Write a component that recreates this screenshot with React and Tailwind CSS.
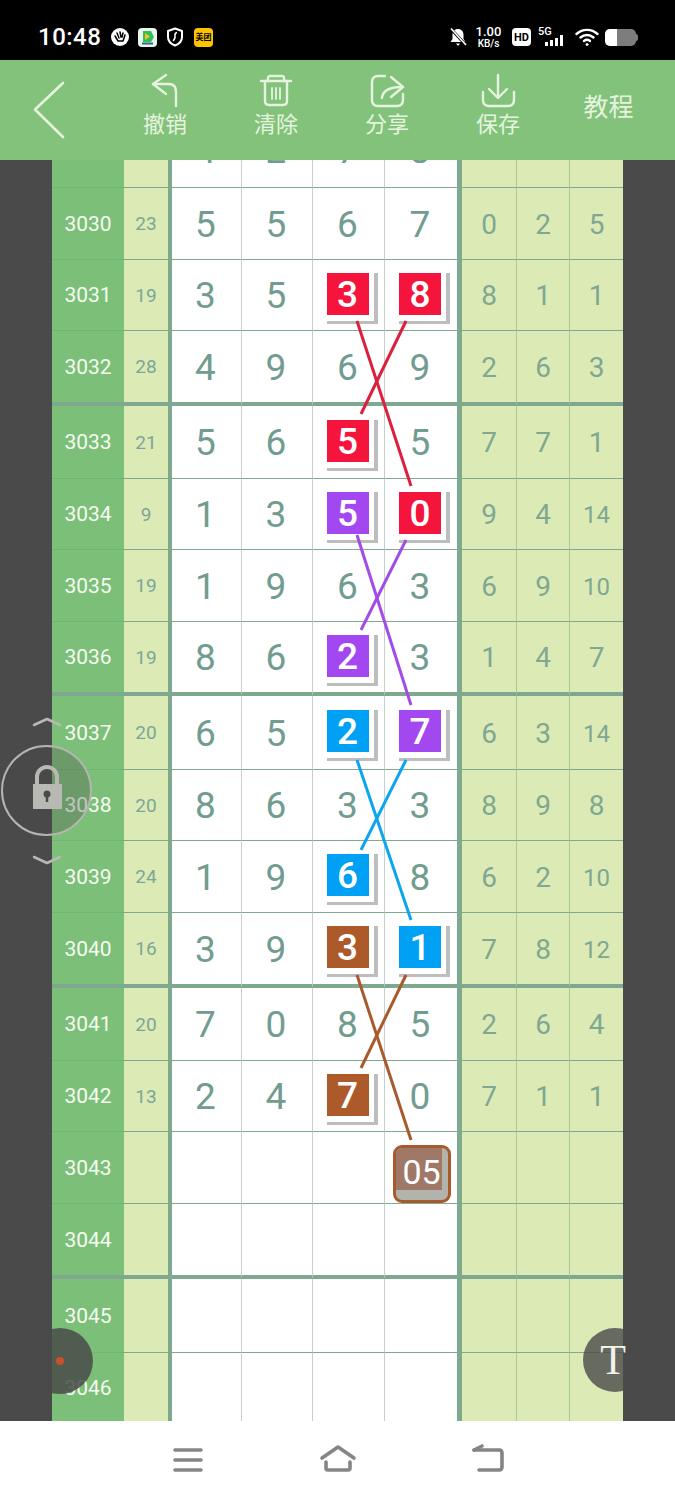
import React from 'react';

const tileColors = {
  red: 'bg-[#f5143c]',
  purple: 'bg-[#a348f0]',
  blue: 'bg-[#00a0f5]',
  brown: 'bg-[#ad5a2a]',
};

const t = (n, c) => ({ n, c });

const rows = [
  { h: 'h-[28px]', cut: true, nums: [4, 2, 7, 8], right: [7, 6, 3] },
  { h: 'h-[72px]', id: 3030, sum: 23, nums: [5, 5, 6, 7], right: [0, 2, 5] },
  { h: 'h-[71px]', id: 3031, sum: 19, nums: [3, 5, t(3, 'red'), t(8, 'red')], right: [8, 1, 1] },
  { h: 'h-[75px]', thick: true, id: 3032, sum: 28, nums: [4, 9, 6, 9], right: [2, 6, 3] },
  { h: 'h-[73px]', id: 3033, sum: 21, nums: [5, 6, t(5, 'red'), 5], right: [7, 7, 1] },
  { h: 'h-[71px]', id: 3034, sum: 9, nums: [1, 3, t(5, 'purple'), t(0, 'red')], right: [9, 4, 14] },
  { h: 'h-[72px]', id: 3035, sum: 19, nums: [1, 9, 6, 3], right: [6, 9, 10] },
  { h: 'h-[74px]', thick: true, id: 3036, sum: 19, nums: [8, 6, t(2, 'purple'), 3], right: [1, 4, 7] },
  { h: 'h-[74px]', id: 3037, sum: 20, nums: [6, 5, t(2, 'blue'), t(7, 'purple')], right: [6, 3, 14] },
  { h: 'h-[71px]', id: 3038, sum: 20, nums: [8, 6, 3, 3], right: [8, 9, 8] },
  { h: 'h-[72px]', id: 3039, sum: 24, nums: [1, 9, t(6, 'blue'), 8], right: [6, 2, 10] },
  { h: 'h-[75px]', thick: true, id: 3040, sum: 16, nums: [3, 9, t(3, 'brown'), t(1, 'blue')], right: [7, 8, 12] },
  { h: 'h-[73px]', id: 3041, sum: 20, nums: [7, 0, 8, 5], right: [2, 6, 4] },
  { h: 'h-[71px]', id: 3042, sum: 13, nums: [2, 4, t(7, 'brown'), 0], right: [7, 1, 1] },
  { h: 'h-[72px]', id: 3043, nums: ['', '', '', 'pending'], right: ['', '', ''] },
  { h: 'h-[75px]', thick: true, id: 3044, nums: ['', '', '', ''], right: ['', '', ''] },
  { h: 'h-[74px]', id: 3045, nums: ['', '', '', ''], right: ['', '', ''] },
  { h: 'h-[69px]', last: true, id: 3046, nums: ['', '', '', ''], right: ['', '', ''] },
];

const numWidths = ['w-[70px]', 'w-[71px]', 'w-[72px]', 'w-[77px]'];
const rightWidths = ['w-[55px]', 'w-[53px]', 'w-[53px]'];

const links = [
  ['#dc1f3e', 357, 321, 411, 486],
  ['#dc1f3e', 406, 321, 361, 414],
  ['#a24be8', 357, 535, 411, 705],
  ['#a24be8', 406, 540, 361, 630],
  ['#0ea5f0', 357, 760, 411, 920],
  ['#0ea5f0', 406, 760, 361, 850],
  ['#a85a2c', 357, 975, 411, 1140],
  ['#a85a2c', 406, 975, 361, 1068],
];

const Tile = ({ n, c }) => (
  <div className={`relative mb-[5px] flex h-[42px] w-[42px] items-center justify-center text-[37px] font-medium text-white ${tileColors[c]}`}>
    <div className="absolute left-0 top-0 h-[51px] w-[51px] border-b-[3px] border-r-4 border-[#bdbdbd]"></div>
    <span className="relative top-[1px]">{n}</span>
  </div>
);

const Pending = () => (
  <div className="relative ml-[3px] mt-[11px] flex h-[58px] w-[58px] items-center justify-center overflow-hidden rounded-[9px] border-[3px] border-[#a85a2c] bg-[#b3b3ae]">
    <div className="absolute left-0 top-0 h-[42px] w-[46px] bg-[#a07868]"></div>
    <span className="relative -mt-[4px] text-[34px] text-white">05</span>
  </div>
);

const Row = ({ row }) => {
  const border = row.thick ? 'border-b-4 border-[#7fa98f]' : row.last ? '' : 'border-b border-[#7fa98f]';
  const align = row.cut ? 'items-end overflow-hidden' : 'items-center pt-[2px]';
  const digit = row.cut ? 'h-[72px] shrink-0 leading-[72px]' : '';
  return (
    <div className={`flex ${row.h}`}>
      <div className={`flex w-[72px] items-center justify-center bg-[#7cbf78] pt-[2px] text-[21px] text-[#f6fbf2] ${row.thick ? border : row.last ? '' : 'border-b border-[#73b37a]'}`}>
        {row.id}
      </div>
      <div className={`flex w-[48px] items-center justify-center border-r-4 border-r-[#7fa98f] bg-[#dcebb5] pt-[2px] text-[19px] text-[#7ba598] ${border}`}>
        {row.sum}
      </div>
      {row.nums.map((v, i) => (
        <div
          key={i}
          className={`flex justify-center bg-white pr-[2px] text-[37px] text-[#719c8f] ${align} ${numWidths[i]} ${border} ${i === 3 ? 'border-r-[5px] border-r-[#7fa98f]' : 'border-r border-r-[#c4d0cc]'}`}
        >
          {v === 'pending' ? <Pending /> : typeof v === 'object' ? <Tile {...v} /> : <span className={digit}>{v}</span>}
        </div>
      ))}
      {row.right.map((v, i) => (
        <div
          key={i}
          className={`flex justify-center bg-[#dcebb5] text-[28px] text-[#7fa792] ${align} ${rightWidths[i]} ${border} ${i === 2 ? '' : 'border-r border-r-[#a8c897]'}`}
        >
          <span className={`${digit} ${v > 9 ? 'text-[24px]' : ''}`}>{v}</span>
        </div>
      ))}
    </div>
  );
};

const HeaderIcon = ({ label, children }) => (
  <div className="flex w-[111px] flex-col items-center pr-[1px] pt-[12px]">
    <svg width="40" height="38" viewBox="0 0 40 38" fill="none" stroke="#e6f4df" strokeWidth="2.4" strokeLinecap="round" strokeLinejoin="round">
      {children}
    </svg>
    <span className="-mt-[1px] text-[22px] leading-[26px] text-[#e6f4df]">{label}</span>
  </div>
);

const StatusBar = () => (
  <div className="flex h-[60px] items-center justify-between bg-black pl-[38px] pr-[37px] pt-[14px] text-white">
    <div className="flex items-center">
      <span className="w-[72px] text-[24px] font-medium leading-none tracking-[0.5px]">10:48</span>
      {/* app notification icons */}
      <svg width="20" height="20" viewBox="0 0 20 20" className="mr-[8px]">
        <circle cx="10" cy="10" r="9" fill="#fff" />
        <path d="M5 9l3 5h5l2-6M7 6l2 5M10 5l1 5M13 6l-1 4" fill="none" stroke="#000" strokeWidth="1.5" strokeLinecap="round" />
      </svg>
      <div className="mr-[9px] flex h-[19px] w-[19px] items-center justify-center rounded-[4px] bg-[#e9f5ef]">
        <svg width="15" height="15" viewBox="0 0 15 15">
          <path d="M3 1h8l3 6-3 5H3z" fill="#2fbf5b" />
          <path d="M5 3l5 3.500-5 3.500z" fill="#f5c518" />
          <rect x="2" y="12.500" width="11" height="2" fill="#2a6d7c" />
        </svg>
      </div>
      <svg width="18" height="20" viewBox="0 0 18 20" className="mr-[10px]" fill="none" stroke="#fff" strokeWidth="2" strokeLinejoin="round">
        <path d="M9 1.500l7 2.500v6c0 4-3 7-7 8.500-4-1.500-7-4.500-7-8.500V4z" />
        <path d="M11 5.500C6 7 12 10 7 14" strokeWidth="1.500" />
      </svg>
      <div className="flex h-[19px] w-[19px] items-center justify-center overflow-hidden rounded-[4px] bg-[#ffc300] text-[8px] font-bold leading-none text-black" style={{ fontFamily: '"Noto Sans CJK SC", sans-serif' }}>
        美团
      </div>
    </div>
    <div className="flex items-center">
      <svg width="20" height="20" viewBox="0 0 20 20" className="mr-[6px]">
        <path d="M10 2c3.500 0 5.500 2.500 5.500 6v4l2 3H2.500l2-3V8C4.500 4.500 6.500 2 10 2z" fill="#fff" />
        <path d="M8 16.500h4L10 19z" fill="#fff" />
        <path d="M2 1l16 17" stroke="#000" strokeWidth="3" />
        <path d="M3 1.500l15 16.500" stroke="#fff" strokeWidth="1.600" />
      </svg>
      <div className="mr-[9px] flex w-[29px] flex-col items-center font-medium leading-none">
        <span className="text-[13px] leading-[13px]">1.00</span>
        <span className="text-[10px] leading-[11px]">KB/s</span>
      </div>
      <div className="mr-[7px] flex h-[18px] w-[19px] items-center justify-center rounded-[4px] bg-white text-[11px] font-bold leading-none text-black">HD</div>
      <div className="relative mr-[8px] h-[20px] w-[29px]">
        <span className="absolute left-0 top-[-1px] text-[11px] font-medium leading-[12px]">5G</span>
        <svg width="29" height="20" viewBox="0 0 29 20" className="absolute left-0 top-0">
          <rect x="7" y="15" width="3" height="4" fill="#fff" />
          <rect x="12" y="13" width="3" height="6" fill="#fff" />
          <rect x="17" y="11" width="3" height="8" fill="#fff" />
          <rect x="22" y="8" width="3" height="11" fill="#fff" />
        </svg>
      </div>
      <svg width="24" height="20" viewBox="0 0 24 20" className="mr-[6px]" fill="none" stroke="#fff" strokeWidth="2.400" strokeLinecap="round">
        <path d="M1.500 7c6-5.500 15-5.500 21 0" />
        <path d="M5.500 10.500c3.800-3.300 9.200-3.300 13 0" />
        <path d="M9 14c1.800-1.400 4.200-1.400 6 0" />
        <circle cx="12" cy="17.500" r="1" fill="#fff" strokeWidth="1" />
      </svg>
      <div className="flex h-[17px] w-[31px] overflow-hidden rounded-[5px] bg-[#7d7d7d]">
        <div className="h-full w-[12px] bg-white"></div>
      </div>
      <div className="h-[7px] w-[2px] rounded-r-[2px] bg-[#7d7d7d]"></div>
    </div>
  </div>
);

const Header = () => (
  <div className="flex h-[100px] bg-[#82c27b]" style={{ fontFamily: '"Noto Sans CJK SC", sans-serif' }}>
    <div className="flex w-[110px] items-center pl-[33px]">
      <svg width="34" height="60" viewBox="0 0 34 60" fill="none" stroke="#e6f4df" strokeWidth="2.600" strokeLinecap="round" strokeLinejoin="round">
        <path d="M30 3L2 29.500 30 57" />
      </svg>
    </div>
    <HeaderIcon label="撤销">
      <path d="M21 3L8 12l13 10" />
      <path d="M8 12h16q7 0 7 8v14" />
    </HeaderIcon>
    <HeaderIcon label="清除">
      <path d="M5 9h30" />
      <path d="M12 9V6q0-2 2-2h12q2 0 2 2v3" />
      <path d="M9 9v20q0 4 4 4h14q4 0 4-4V9" />
      <path d="M16 16v11M20 16v11M24 16v11" strokeWidth="1.800" />
    </HeaderIcon>
    <HeaderIcon label="分享">
      <path d="M18 4h-7q-6 0-6 6v18q0 6 6 6h19q6 0 6-6v-6" />
      <path d="M15 26q1-11 20-11" />
      <path d="M24 5l12 10-12 10" />
    </HeaderIcon>
    <HeaderIcon label="保存">
      <path d="M20 3v22" />
      <path d="M11 17l9 9 9-9" />
      <path d="M5 20v8q0 6 6 6h19q6 0 6-6v-8" />
    </HeaderIcon>
    <div className="flex w-[109px] items-center justify-center pb-[9px] text-[25px] text-[#e6f4df]">教程</div>
  </div>
);

const BottomNav = () => (
  <div className="flex h-[79px] items-center bg-white pb-[1px]">
    <svg width="675" height="79" viewBox="0 1421 675 79" fill="none" stroke="#858585" strokeWidth="3.600" strokeLinecap="round" strokeLinejoin="round">
      <path d="M175 1450h26M175 1460h26M175 1470h26" />
      <path d="M322 1458l16-11 16 11" />
      <path d="M326 1462v6q0 2 2 2h20q2 0 2-2v-6" />
      <path d="M474 1450h25q3 0 3 3v14q0 3-3 3h-20" />
      <path d="M482 1446l-8 4" />
    </svg>
  </div>
);

export default function App() {
  return (
    <div className="relative h-[1500px] w-[675px] overflow-hidden bg-[#4a4a4a]" style={{ fontFamily: 'Roboto, "Noto Sans CJK SC", sans-serif' }}>
      <StatusBar />
      <Header />

      <div className="relative h-[1261px] overflow-hidden pl-[52px]">
        {rows.map((row, i) => (
          <Row key={i} row={row} />
        ))}

        {/* trend lines between the marked numbers */}
        <svg className="absolute left-0 top-0" width="675" height="1261" viewBox="0 160 675 1261">
          {links.map(([color, x1, y1, x2, y2], i) => (
            <line key={i} x1={x1} y1={y1} x2={x2} y2={y2} stroke={color} strokeWidth="3" />
          ))}
        </svg>

        {/* floating lock button */}
        <div className="absolute left-[1px] top-[585px] h-[91px] w-[91px] rounded-full border-2 border-[#b5b5b0] bg-[#4a4a4a]/30"></div>
        <svg className="absolute left-[25px] top-[555px]" width="44" height="155" viewBox="0 0 44 155" fill="none" stroke="#b9b9b4" strokeLinejoin="round">
          <path d="M9 10l13-6 13 6" strokeWidth="2.500" strokeLinecap="round" />
          <path d="M9 142l13 6 13-6" strokeWidth="2.500" strokeLinecap="round" />
          <path d="M12 69V62a10 10 0 0 1 20 0v7" strokeWidth="4" />
          <path d="M8 69h29v25H8z" fill="#b9b9b4" strokeWidth="0" />
          <circle cx="22" cy="79" r="3.500" fill="#4a4a4a" strokeWidth="0" />
          <path d="M22 79v8" stroke="#4a4a4a" strokeWidth="2.500" />
        </svg>

        {/* floating record button */}
        <div className="absolute left-[27px] top-[1168px] flex h-[66px] w-[66px] items-center justify-center rounded-full bg-[#4a4a4a]/85">
          <div className="h-[8px] w-[8px] rounded-full bg-[#c8502a]"></div>
        </div>

        {/* floating text button */}
        <div className="absolute left-[583px] top-[1168px] flex h-[64px] w-[64px] items-center justify-center rounded-full bg-[#4a4a4a]/80">
          <span className="pr-[4px] text-[42px] leading-none text-[#f2f2ee]" style={{ fontFamily: '"Liberation Serif", serif' }}>T</span>
        </div>
      </div>

      <BottomNav />
    </div>
  );
}
